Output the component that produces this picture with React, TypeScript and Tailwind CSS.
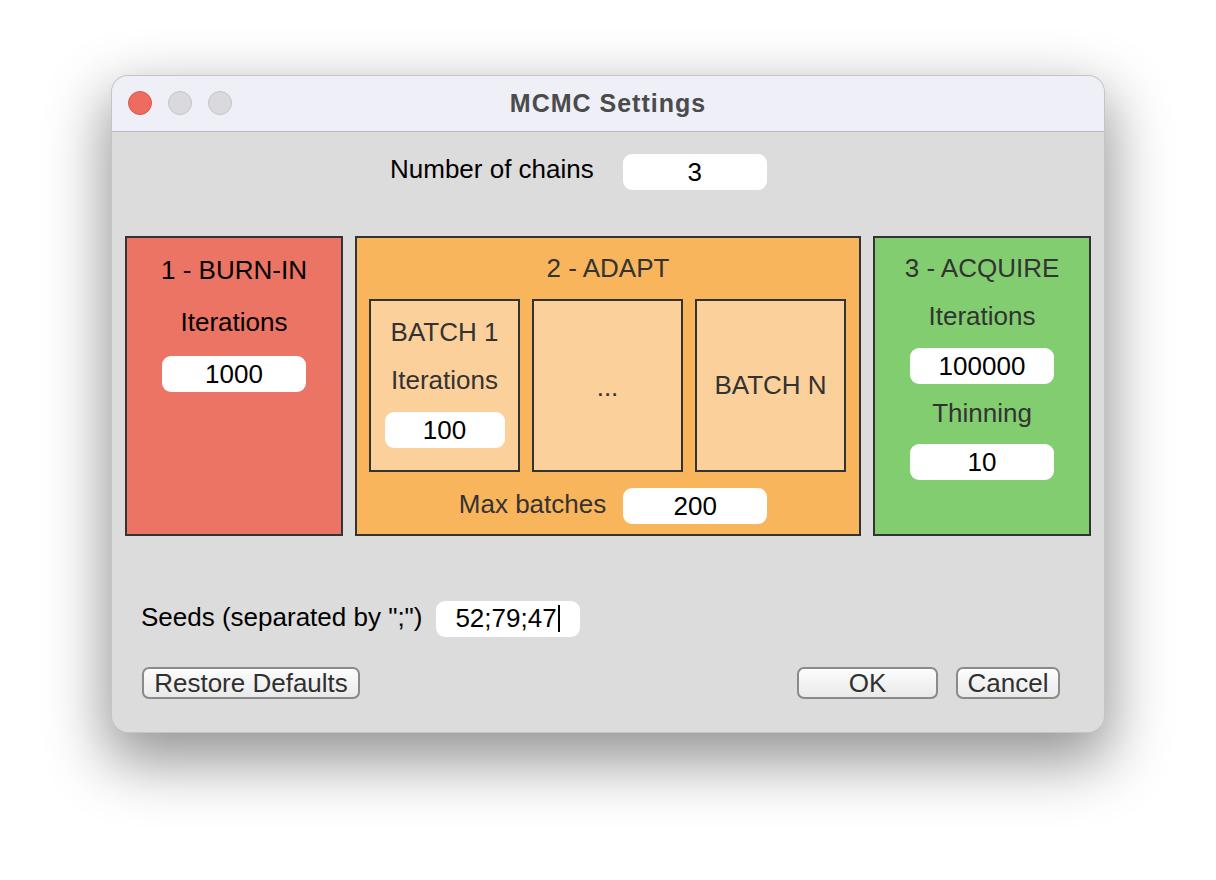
import React, { useState } from 'react';

const font = 'font-["Liberation_Sans",Arial,sans-serif]';

const Field = ({ value, w = 'w-[144px]' }: { value: string; w?: string }) => (
  <div
    className={`${w} flex h-[36px] items-center justify-center rounded-[9px] bg-white text-[26px] text-black`}
  >
    {value}
  </div>
);

const MacButton = ({ label, w }: { label: string; w: string }) => (
  <button
    className={`${w} flex h-[32px] items-center justify-center rounded-[7px] border-2 border-[#8a8a8a] bg-gradient-to-b from-[#fdfdfd] to-[#e9e9e9] text-[26px] leading-none text-[#303030]`}
  >
    {label}
  </button>
);

const App = () => {
  const [seeds] = useState('52;79;47');

  return (
    <div className={`min-h-screen bg-white pt-[76px] pl-[112px] ${font}`}>
      <div className="flex h-[656px] w-[992px] flex-col overflow-hidden rounded-[16px] bg-[#dcdcdc] shadow-[0_0_0_1px_#c4c4c4,0_24px_60px_6px_rgba(0,0,0,0.42)]">
        {/* title bar */}
        <div className="relative flex h-[56px] shrink-0 items-center justify-center border-b border-[#b9b9b9] bg-[#eeeff7]">
          <div className="absolute top-[15px] left-[16px] flex gap-[16px]">
            <span className="h-[24px] w-[24px] rounded-full border border-[#d9574c] bg-[#ee6b60]" />
            <span className="h-[24px] w-[24px] rounded-full border border-[#c2c2c8] bg-[#d9d9de]" />
            <span className="h-[24px] w-[24px] rounded-full border border-[#c2c2c8] bg-[#d9d9de]" />
          </div>
          <h1 className="text-[25px] font-bold tracking-[1px] text-[#4b4b4b]">MCMC Settings</h1>
        </div>

        {/* number of chains */}
        <div className="mt-[22px] flex items-center gap-[29px] pl-[278px]">
          <span className="-mt-[6px] text-[26px] text-black">Number of chains</span>
          <Field value="3" />
        </div>

        {/* stages */}
        <div className="mt-[46px] flex h-[300px] gap-[12px] px-[13px]">
          <div className="flex w-[218px] flex-col items-center border-2 border-[#333] bg-[#ec7464] pt-[17px] text-[26px] text-black">
            <div className="leading-[30px]">1 - BURN-IN</div>
            <div className="mt-[22px] leading-[30px]">Iterations</div>
            <div className="mt-[19px]">
              <Field value="1000" />
            </div>
          </div>

          <div className="flex w-[506px] flex-col items-center border-2 border-[#333] bg-[#f9b55b] pt-[15px] text-[26px] text-[#333]">
            <div className="leading-[30px]">2 - ADAPT</div>
            <div className="mt-[16px] flex h-[173px] w-full gap-[12px] px-[12px]">
              <div className="flex w-[151px] flex-col items-center border-2 border-[#333] bg-[#fbd09b] pt-[16px]">
                <div className="leading-[30px]">BATCH 1</div>
                <div className="mt-[18px] leading-[30px]">Iterations</div>
                <div className="mt-[17px]">
                  <Field value="100" w="w-[120px]" />
                </div>
              </div>
              <div className="flex w-[151px] items-center justify-center border-2 border-[#333] bg-[#fbd09b] pt-[4px]">
                ...
              </div>
              <div className="flex w-[151px] items-center justify-center border-2 border-[#333] bg-[#fbd09b]">
                BATCH N
              </div>
            </div>
            <div className="mt-[16px] flex items-center gap-[17px] pl-[10px]">
              <span className="-mt-[4px]">Max batches</span>
              <Field value="200" />
            </div>
          </div>

          <div className="flex w-[218px] flex-col items-center border-2 border-[#333] bg-[#82cd6f] pt-[15px] text-[26px] text-[#333]">
            <div className="leading-[30px]">3 - ACQUIRE</div>
            <div className="mt-[18px] leading-[30px]">Iterations</div>
            <div className="mt-[17px]">
              <Field value="100000" />
            </div>
            <div className="mt-[14px] leading-[30px]">Thinning</div>
            <div className="mt-[16px]">
              <Field value="10" />
            </div>
          </div>
        </div>

        {/* seeds */}
        <div className="mt-[64px] flex items-center gap-[13px] pl-[29px]">
          <span className="-mt-[2px] text-[26px] text-black">Seeds (separated by ";")</span>
          <div className="flex h-[36px] w-[144px] items-center justify-center rounded-[9px] bg-white text-[26px] text-black">
            <span>{seeds}</span>
            <span className="ml-[1px] h-[27px] w-[2px] bg-black" />
          </div>
        </div>

        {/* buttons */}
        <div className="mt-[30px] flex items-center pr-[44px] pl-[30px]">
          <MacButton label="Restore Defaults" w="w-[218px]" />
          <div className="ml-auto flex gap-[18px]">
            <MacButton label="OK" w="w-[141px]" />
            <MacButton label="Cancel" w="w-[104px]" />
          </div>
        </div>
      </div>
    </div>
  );
};

export default App;
